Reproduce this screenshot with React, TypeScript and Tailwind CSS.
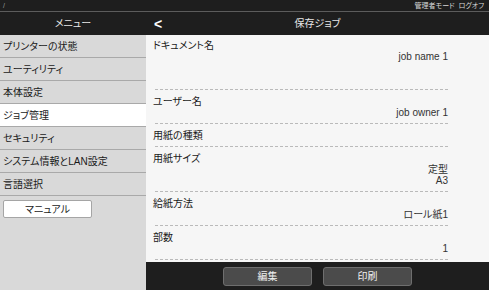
const FONT = "font-['Liberation_Sans','Noto_Sans_CJK_JP',sans-serif] [font-feature-settings:'palt']";

const MENU = [
  "プリンターの状態",
  "ユーティリティ",
  "本体設定",
  "ジョブ管理",
  "セキュリティ",
  "システム情報とLAN設定",
  "言語選択",
];

type Row = { label: string; values: string[]; extra?: boolean };

const ROWS: Row[] = [
  { label: "ドキュメント名", values: ["job name 1"], extra: true },
  { label: "ユーザー名", values: ["job owner 1"] },
  { label: "用紙の種類", values: [] },
  { label: "用紙サイズ", values: ["定型", "A3"] },
  { label: "給紙方法", values: ["ロール紙1"] },
  { label: "部数", values: ["1"] },
];

export default function App() {
  return (
    <div className={`flex h-[290px] w-[489px] flex-col overflow-hidden bg-[#1e1e1e] ${FONT}`}>
      {/* top strip */}
      <div className="flex h-[12px] items-center justify-between border-b border-[#5c5c5c] px-[3px] text-[7px] leading-none text-[#d8d8d8]">
        <span className="text-[#9a9a9a]">/</span>
        <span className="pr-[2px]">管理者モード&nbsp;&nbsp;ログオフ</span>
      </div>

      {/* header */}
      <div className="flex h-[23px] items-center text-[10px] text-[#e8e8e8]">
        <div className="w-[146px] text-center">メニュー</div>
        <div className="relative flex h-full flex-1 items-center justify-center">
          <span className="absolute left-[8px] top-1/2 -translate-y-1/2 text-[14px] font-bold leading-none text-white">&lt;</span>
          <span>保存ジョブ</span>
        </div>
      </div>

      <div className="flex min-h-0 flex-1">
        {/* sidebar */}
        <aside className="w-[146px] shrink-0 bg-[#d9d9d9] text-[10px] text-[#1a1a1a]">
          {MENU.map((m) => (
            <div
              key={m}
              className={`flex h-[23px] items-center border-b border-[#a9a9a9] pl-[3px] ${m === "ジョブ管理" ? "bg-white" : ""}`}
            >
              {m}
            </div>
          ))}
          <div className="px-[3px] pt-[4px]">
            <button className="flex h-[18px] w-[89px] items-center justify-center rounded-[2px] border border-[#a5a5a5] bg-white text-[10px] text-[#222]">
              マニュアル
            </button>
          </div>
        </aside>

        {/* main */}
        <main className="flex min-w-0 flex-1 flex-col">
          <div className="min-h-0 flex-1 overflow-hidden bg-[#f6f6f6] pl-[9px] pr-[41px]">
            {ROWS.map((r) => (
              <div
                key={r.label}
                className={`border-b border-dashed border-[#bababa] ${r.extra ? "pb-[27px] pt-[5px]" : "pb-[5px] pt-[6px]"}`}
              >
                <div className="-ml-[2px] h-[11px] text-[10px] leading-[11px] text-[#1a1a1a]">{r.label}</div>
                {r.values.map((v) => (
                  <div key={v} className="h-[11px] text-right text-[10px] leading-[11px] text-[#333]">
                    {v}
                  </div>
                ))}
              </div>
            ))}
          </div>

          {/* bottom bar */}
          <div className="flex h-[28px] items-center justify-center gap-[11px] bg-[#1e1e1e]">
            {["編集", "印刷"].map((b) => (
              <button
                key={b}
                className="flex h-[19px] w-[89px] items-center justify-center rounded-[3px] border border-[#6e6e6e] bg-[#4b4b4b] text-[10px] text-[#f0f0f0]"
              >
                {b}
              </button>
            ))}
          </div>
        </main>
      </div>
    </div>
  );
}
